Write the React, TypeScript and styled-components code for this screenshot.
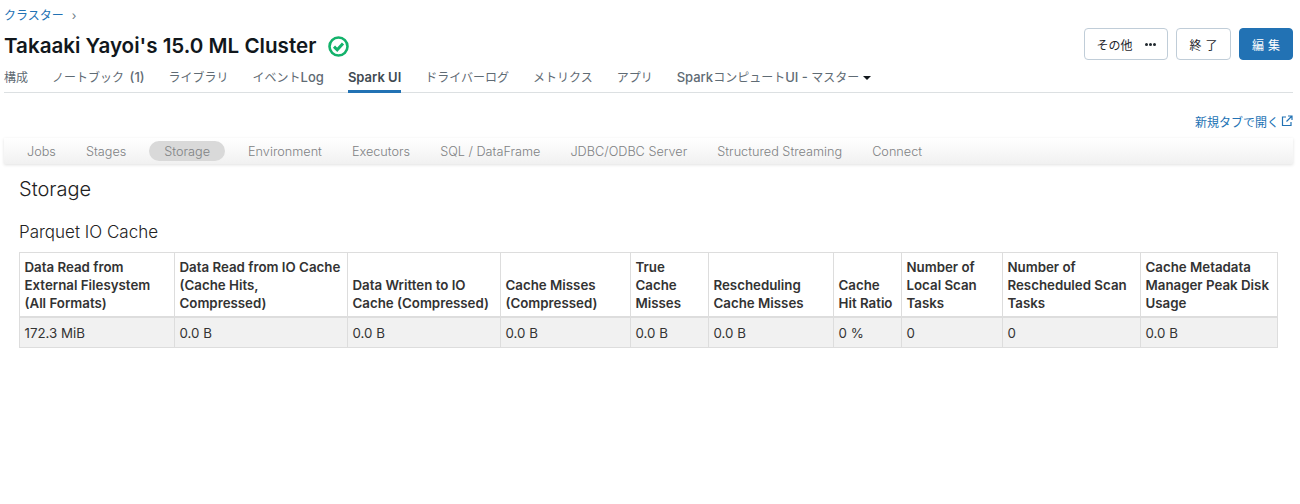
import * as React from "react";
import styled, { createGlobalStyle } from "styled-components";

const GlobalStyle = createGlobalStyle`
  html, body {
    margin: 0;
    padding: 0;
    background: #fff;
    font-family: Inter, "Noto Sans CJK JP", sans-serif;
  }
`;

const Page = styled.div`
  width: 1300px;
  height: 504px;
  overflow: hidden;
  box-sizing: border-box;
  padding: 7px 7px 0 4px;
`;

const Breadcrumb = styled.div`
  display: flex;
  align-items: center;
  gap: 8px;
  height: 17px;
  font-size: 12px;
  line-height: 17px;
  color: #2272b4;
`;

const Chevron = styled.span`
  color: #6b7a86;
  font-size: 12px;
`;

const HeaderRow = styled.div`
  display: flex;
  align-items: center;
  justify-content: space-between;
  height: 44px;
`;

const TitleGroup = styled.div`
  display: flex;
  align-items: center;
  gap: 12px;
`;

const Title = styled.h1`
  margin: 0;
  font-size: 20.6px;
  line-height: 28px;
  font-weight: 600;
  color: #11171c;
`;

const Actions = styled.div`
  display: flex;
  gap: 8px;
  margin-top: -4px;
`;

const Button = styled.button<{ $primary?: boolean; $width: number }>`
  width: ${(p) => p.$width}px;
  height: 32px;
  box-sizing: border-box;
  display: flex;
  align-items: center;
  justify-content: center;
  gap: 12px;
  border-radius: 4px;
  border: 1px solid ${(p) => (p.$primary ? "#2272b4" : "#c0cdd8")};
  background: ${(p) => (p.$primary ? "#2272b4" : "#fff")};
  color: ${(p) => (p.$primary ? "#fff" : "#1f272d")};
  font-family: inherit;
  font-size: 12px;
  padding: 0;
`;

const SpacedLabel = styled.span`
  letter-spacing: 4px;
  margin-right: -4px;
`;

const TabBar = styled.nav`
  display: flex;
  gap: 24px;
  height: 28px;
  margin-top: -4px;
  border-bottom: 1px solid #dce0e2;
`;

const Tab = styled.a<{ $active?: boolean }>`
  display: flex;
  align-items: center;
  box-sizing: border-box;
  height: 29px;
  padding-bottom: 1px;
  font-size: 12px;
  font-weight: 400;
  white-space: pre;
  color: ${(p) => (p.$active ? "#3f4a52" : "#5f6b74")};
  border-bottom: 3px solid ${(p) => (p.$active ? "#2272b4" : "transparent")};
`;

const Latin = styled.span<{ $active?: boolean }>`
  font-size: 13px;
  font-weight: ${(p) => (p.$active ? 600 : 500)};
`;

const Caret = styled.span`
  width: 0;
  height: 0;
  margin: 3px 0 0 4px;
  border-left: 4px solid transparent;
  border-right: 4px solid transparent;
  border-top: 4px solid #11171c;
`;

const LinkRow = styled.div`
  display: flex;
  justify-content: flex-end;
  align-items: center;
  gap: 2px;
  height: 18px;
  margin-top: 19px;
  font-size: 12px;
  color: #2272b4;
`;

const SparkNav = styled.div`
  display: flex;
  align-items: center;
  height: 26px;
  margin-top: 8px;
  padding-left: 8px;
  background: linear-gradient(#ffffff, #f1f1f1);
  box-shadow: 0 1px 3px rgba(0, 0, 0, 0.12);
`;

const SparkLink = styled.a<{ $active?: boolean }>`
  padding: 0 15px;
  margin: 0 ${(p) => (p.$active ? 8 : 0)}px;
  height: 20px;
  line-height: 21px;
  font-size: 12.7px;
  font-weight: 300;
  color: #808284;
  border-radius: 10px;
  background: ${(p) => (p.$active ? "#d9d9d9" : "transparent")};
  white-space: nowrap;
`;

const Content = styled.main`
  padding: 0 11px 0 15px;
`;

const PageHeading = styled.h3`
  margin: 12px 0 0;
  font-size: 20px;
  line-height: 26px;
  font-weight: 300;
  color: #222;
`;

const SectionHeading = styled.h4`
  margin: 19px 0 0;
  font-size: 17px;
  line-height: 22px;
  font-weight: 300;
  color: #222;
`;

const Table = styled.table`
  margin-top: 9px;
  width: 1258px;
  table-layout: fixed;
  border-collapse: collapse;
  font-size: 13.3px;
  color: #333;
`;

const Th = styled.th`
  padding: 5px 4px 4px 4.5px;
  vertical-align: bottom;
  text-align: left;
  font-weight: 600;
  line-height: 18px;
  border: 1px solid #ddd;
  border-bottom: 2px solid #ddd;
  color: #333;
`;

const Td = styled.td`
  height: 30px;
  box-sizing: border-box;
  padding: 6px 4px 4px 4.5px;
  line-height: 18px;
  background: #f1f1f1;
  border: 1px solid #ddd;
`;

const StatusIcon = () => (
  <svg width="21" height="21" viewBox="0 0 21 21" fill="none">
    <circle cx="10.5" cy="10.5" r="9" stroke="#13b26b" strokeWidth="2.6" />
    <path d="M6 10.6l3.2 3.2 5.8-6.2" stroke="#13b26b" strokeWidth="3" />
  </svg>
);

const ExternalIcon = () => (
  <svg width="12" height="12" viewBox="0 0 12 12" fill="none" stroke="#2272b4" strokeWidth="1.2">
    <path d="M5 2H1.5v8.5H10V7" />
    <path d="M7 1h4v4M11 1L5.5 6.5" />
  </svg>
);

const MoreDots = () => (
  <svg width="11" height="3" viewBox="0 0 11 3" fill="#1f272d">
    <circle cx="1.5" cy="1.5" r="1.5" />
    <circle cx="5.5" cy="1.5" r="1.5" />
    <circle cx="9.5" cy="1.5" r="1.5" />
  </svg>
);

const sparkTabs = ["Jobs", "Stages", "Storage", "Environment", "Executors", "SQL / DataFrame", "JDBC/ODBC Server", "Structured Streaming", "Connect"];

const columns = [
  { width: 155, head: "Data Read from External Filesystem (All Formats)", value: "172.3 MiB" },
  { width: 173, head: "Data Read from IO Cache (Cache Hits, Compressed)", value: "0.0 B" },
  { width: 153, head: "Data Written to IO Cache (Compressed)", value: "0.0 B" },
  { width: 130, head: "Cache Misses (Compressed)", value: "0.0 B" },
  { width: 78, head: "True Cache Misses", value: "0.0 B" },
  { width: 125, head: "Rescheduling Cache Misses", value: "0.0 B" },
  { width: 68, head: "Cache Hit Ratio", value: "0 %" },
  { width: 101, head: "Number of Local Scan Tasks", value: "0" },
  { width: 138, head: "Number of Rescheduled Scan Tasks", value: "0" },
  { width: 137, head: "Cache Metadata Manager Peak Disk Usage", value: "0.0 B" },
];

export default function App() {
  return (
    <Page>
      <GlobalStyle />
      <Breadcrumb>
        クラスター <Chevron>›</Chevron>
      </Breadcrumb>
      <HeaderRow>
        <TitleGroup>
          <Title>Takaaki Yayoi's 15.0 ML Cluster</Title>
          <StatusIcon />
        </TitleGroup>
        <Actions>
          <Button $width={84}>
            その他 <MoreDots />
          </Button>
          <Button $width={55}><SpacedLabel>終了</SpacedLabel></Button>
          <Button $primary $width={54}><SpacedLabel>編集</SpacedLabel></Button>
        </Actions>
      </HeaderRow>
      <TabBar>
        <Tab>構成</Tab>
        <Tab><span>ノートブック{"\u2009 "}<Latin>(1)</Latin></span></Tab>
        <Tab>ライブラリ</Tab>
        <Tab><span>イベント<Latin>Log</Latin></span></Tab>
        <Tab $active><Latin $active>Spark UI</Latin></Tab>
        <Tab>ドライバーログ</Tab>
        <Tab>メトリクス</Tab>
        <Tab>アプリ</Tab>
        <Tab>
          <span><Latin>Spark</Latin>コンピュート<Latin>UI - </Latin>マスター</span><Caret />
        </Tab>
      </TabBar>
      <LinkRow>
        新規タブで開く <ExternalIcon />
      </LinkRow>
      <SparkNav>
        {sparkTabs.map((t) => (
          <SparkLink key={t} $active={t === "Storage"}>{t}</SparkLink>
        ))}
      </SparkNav>
      <Content>
        <PageHeading>Storage</PageHeading>
        <SectionHeading>Parquet IO Cache</SectionHeading>
        <Table>
          <colgroup>
            {columns.map((c) => (
              <col key={c.head} width={c.width} />
            ))}
          </colgroup>
          <thead>
            <tr>
              {columns.map((c) => (
                <Th key={c.head}>{c.head}</Th>
              ))}
            </tr>
          </thead>
          <tbody>
            <tr>
              {columns.map((c) => (
                <Td key={c.head}>{c.value}</Td>
              ))}
            </tr>
          </tbody>
        </Table>
      </Content>
    </Page>
  );
}
